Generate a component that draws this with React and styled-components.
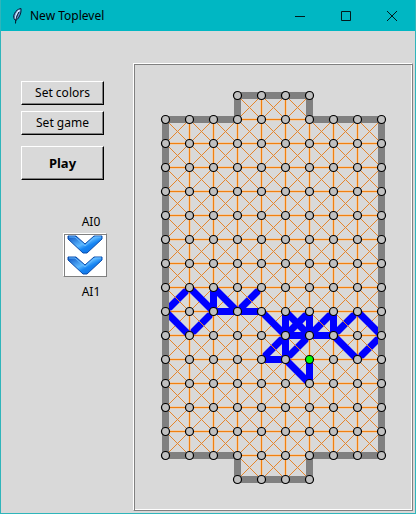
import React from "react";
import styled, { createGlobalStyle, css } from "styled-components";

const GlobalStyle = createGlobalStyle`
  *, *::before, *::after { box-sizing: border-box; }
  html, body, #root { height: 100%; }
  body {
    margin: 0;
    background: #d9d9d9;
    color: #000;
    font: 12px/16px "Noto Sans", "Open Sans", sans-serif;
  }
`;

const ridge = css`
  border: 1px solid;
  border-color: #fff #808080 #808080 #fff;
  box-shadow: inset 1px 1px 0 #808080, inset -1px -1px 0 #fff;
`;

const Window = styled.main`
  display: flex;
  flex-direction: column;
  min-height: 100%;
  border: 1px solid #2fb5bb;
  border-top: 0;
  background: #d9d9d9;
`;

const TitleBar = styled.header`
  display: flex;
  align-items: center;
  height: 31px;
  padding-left: 9px;
  background: #00b7c3;
`;

const Title = styled.h1`
  flex: 1;
  margin: 0 0 0 6px;
  font-size: 12px;
  font-weight: 400;
  line-height: 16px;
`;

const WindowButton = styled.button`
  display: grid;
  place-items: center;
  width: 46px;
  height: 30px;
  padding: 0;
  border: 0;
  background: transparent;
  color: #001a1c;
`;

const Body = styled.div`
  display: flex;
  flex: 1;
`;

const Sidebar = styled.aside`
  display: flex;
  flex-direction: column;
  width: 132px;
  flex-shrink: 0;
  padding: 50px 26px 0 20px;
`;

const ButtonStack = styled.div`
  display: flex;
  flex-direction: column;
  gap: 6px;
  margin-right: 3px;
`;

const PushButton = styled.button`
  height: ${(p) => (p.$large ? 34 : 24)}px;
  margin-top: ${(p) => (p.$large ? 5 : 0)}px;
  padding: 0 0 1px;
  border: 1px solid;
  border-color: #fff #000 #000 #fff;
  box-shadow: inset -1px -1px 0 #808080;
  background: #d9d9d9;
  color: #000;
  font: ${(p) => (p.$large ? "700 13px" : "400 12px")}/16px "Noto Sans", "Open Sans", sans-serif;
`;

const Players = styled.section`
  display: flex;
  flex-direction: column;
  align-items: center;
  align-self: flex-end;
  width: 44px;
  margin-top: 34px;
`;

const PlayerName = styled.span`
  padding-left: 12px;
`;

const TurnButton = styled.button`
  ${ridge}
  display: grid;
  place-items: center;
  width: 44px;
  height: 44px;
  margin: 3px 0 7px;
  padding: 0;
  background: #fff;
`;

const Pitch = styled.section`
  ${ridge}
  flex: 1;
  margin: 32px 2px 2px 0;
  padding: 21px 0 0 21px;
`;

const STEP = 24;
const ORIGIN = 10;
const at = (n) => ORIGIN + n * STEP;

const inField = (c, r) => (r === 0 || r === 16 ? c >= 3 && c <= 6 : r > 0 && r < 16 && c >= 0 && c <= 9);

const cells = [];
const nodes = [];
for (let r = 0; r <= 16; r++) {
  for (let c = 0; c <= 9; c++) {
    if (inField(c, r)) nodes.push([c, r]);
    if (inField(c, r) && inField(c + 1, r) && inField(c, r + 1) && inField(c + 1, r + 1)) cells.push([c, r]);
  }
}

const moves = [
  [4, 8, 3, 9], [3, 9, 2, 8], [2, 8, 2, 9], [2, 9, 1, 8], [1, 8, 0, 9],
  [0, 9, 1, 10], [1, 10, 2, 9], [2, 9, 3, 9], [3, 9, 4, 9], [4, 9, 5, 10],
  [5, 10, 4, 11], [4, 11, 5, 11], [5, 11, 5, 10], [5, 10, 5, 9], [5, 9, 6, 10],
  [6, 10, 6, 9], [6, 9, 5, 10], [5, 10, 6, 10], [6, 10, 7, 9], [7, 9, 7, 10],
  [7, 10, 8, 9], [8, 9, 9, 10], [9, 10, 8, 11], [8, 11, 7, 10], [7, 10, 6, 10],
  [6, 10, 5, 11], [5, 11, 6, 12], [6, 12, 6, 11],
];

const segment = ([a, b, c, d]) => `M${at(a)} ${at(b)}L${at(c)} ${at(d)}`;
const rising = (m) => (m[2] - m[0]) * (m[3] - m[1]) < 0;

const outline = [[3, 0], [6, 0], [6, 1], [9, 1], [9, 15], [6, 15], [6, 16], [3, 16], [3, 15], [0, 15], [0, 1], [3, 1]]
  .map(([c, r]) => `${at(c)},${at(r)}`)
  .join(" ");

const rows = Array.from({ length: 15 }, (_, i) => i + 1);
const columns = Array.from({ length: 8 }, (_, i) => i + 1);
const reachesGoal = (c) => c >= 3 && c <= 6;
const diagonalUp = cells.map(([c, r]) => `M${at(c)} ${at(r + 1)}l24-24`).join("");
const diagonalDown = cells.map(([c, r]) => `M${at(c)} ${at(r)}l24 24`).join("");
const straight =
  rows.map((r) => `M${at(0)} ${at(r)}H${at(9)}`).join("") +
  columns.map((c) => `M${at(c)} ${at(reachesGoal(c) ? 0 : 1)}V${at(reachesGoal(c) ? 16 : 15)}`).join("");

function Board() {
  return (
    <svg width="237" height="405" viewBox="0 0 237 405" role="img" aria-label="Paper soccer pitch" fill="none">
      <g transform="translate(.5 .5)">
        <path d={diagonalUp} stroke="#e5852c" />
        <path d={moves.filter(rising).map(segment).join("")} stroke="#00f" strokeWidth="7" />
        <path d={diagonalDown} stroke="#e5852c" />
        <path d={straight} stroke="#ffc080" strokeOpacity=".5" strokeWidth="3" />
        <path d={straight} stroke="#f08010" />
        <path d={moves.filter((m) => !rising(m)).map(segment).join("")} stroke="#00f" strokeWidth="7" />
        <polygon points={outline} stroke="#808080" strokeWidth="7" />
        {nodes.map(([c, r]) => (
          <circle
            key={`${c}-${r}`}
            cx={at(c)}
            cy={at(r)}
            r="4"
            fill={c === 6 && r === 11 ? "#0f0" : "#c0c0c0"}
            stroke="#000"
            strokeWidth="1.2"
          />
        ))}
      </g>
    </svg>
  );
}

function Feather() {
  return (
    <svg width="14" height="18" viewBox="0 0 14 18" fill="none" aria-hidden="true">
      <path d="M5.5 13.5C3.5 12 3 9 4.5 6.5 6 3.5 8 2 11 1.5c.4 3-.5 6-2 8.5-.8 1.5-2 3-3.5 3.5z" fill="#5b8fc9" stroke="#061c38" />
      <path d="M9.5 3C6.5 6 5.5 9 5.5 12" stroke="#dceeff" strokeWidth="1.5" />
      <path d="M9 5C7 8 5.5 12 5.5 16.5" stroke="#001426" />
    </svg>
  );
}

function Chevrons() {
  return (
    <svg width="40" height="40" viewBox="0 0 40 40" aria-hidden="true">
      <defs>
        <linearGradient id="chevron" x1="0" y1="0" x2="1" y2="1">
          <stop offset="0" stopColor="#0a4fc0" />
          <stop offset=".45" stopColor="#5cb8ff" />
          <stop offset=".6" stopColor="#1684f2" />
          <stop offset="1" stopColor="#0f68d8" />
        </linearGradient>
      </defs>
      {[0, 21].map((y) => (
        <g key={y} transform={`translate(2 ${y})`} strokeLinejoin="round">
          <path d="M1 1h8l9 8 9-8h8v3L20 18h-4L1 4z" fill="url(#chevron)" stroke="#0b4cab" />
          <path d="M2 2h6l10 9 10-9h6" fill="none" stroke="#65baff" />
        </g>
      ))}
    </svg>
  );
}

export default function App() {
  return (
    <>
      <GlobalStyle />
      <Window>
        <TitleBar>
          <Feather />
          <Title>New Toplevel</Title>
          <WindowButton type="button" aria-label="Minimize">
            <svg width="10" height="10"><path d="M0 5.5h10" stroke="currentColor" /></svg>
          </WindowButton>
          <WindowButton type="button" aria-label="Maximize">
            <svg width="10" height="10"><path d="M.5.5h9v9h-9z" fill="none" stroke="currentColor" /></svg>
          </WindowButton>
          <WindowButton type="button" aria-label="Close">
            <svg width="10" height="10"><path d="M0 0l10 10M10 0L0 10" stroke="currentColor" /></svg>
          </WindowButton>
        </TitleBar>
        <Body>
          <Sidebar>
            <ButtonStack>
              <PushButton type="button">Set colors</PushButton>
              <PushButton type="button">Set game</PushButton>
              <PushButton type="button" $large>Play</PushButton>
            </ButtonStack>
            <Players>
              <PlayerName>AI0</PlayerName>
              <TurnButton type="button" aria-label="Player to move"><Chevrons /></TurnButton>
              <PlayerName>AI1</PlayerName>
            </Players>
          </Sidebar>
          <Pitch>
            <Board />
          </Pitch>
        </Body>
      </Window>
    </>
  );
}
